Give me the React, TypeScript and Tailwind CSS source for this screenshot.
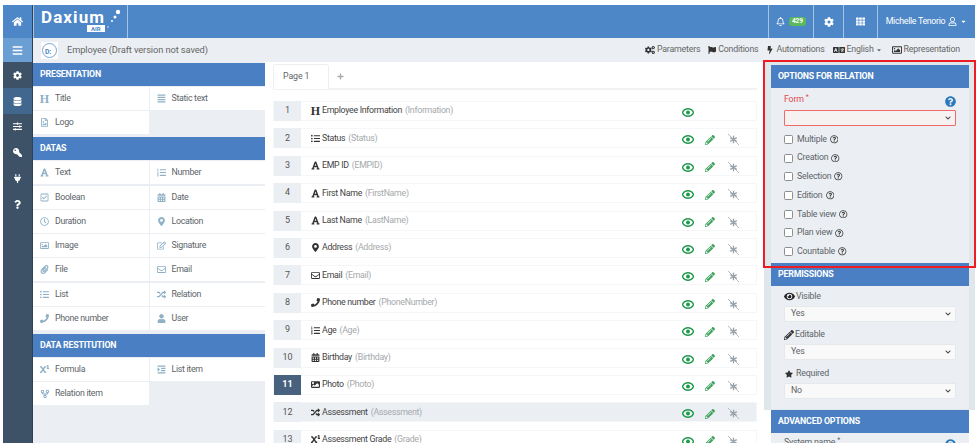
import React from "react";
import {
  FaHome, FaBars, FaCog, FaDatabase, FaSlidersH, FaKey, FaPlug, FaQuestion, FaRegBell, FaTh, FaRegUser, FaCogs, FaFlag,
  FaBolt, FaLanguage, FaRegImage, FaImage, FaEye, FaPencilAlt, FaAlignJustify, FaRegFileImage, FaFont, FaListOl,
  FaRegCheckSquare, FaCalendarAlt, FaRegClock, FaMapMarkerAlt, FaRegEdit, FaPaperclip, FaRegEnvelope, FaListUl, FaRandom,
  FaPhoneAlt, FaUser, FaSuperscript, FaIndent, FaChevronDown, FaQuestionCircle, FaRegQuestionCircle, FaStar, FaCaretDown, FaPlus,
} from "react-icons/fa";
import { GitFork } from "lucide-react";

const H = () => <span className="font-['Liberation_Serif',serif] text-[12px] font-bold leading-none tracking-normal">H</span>;

const Eye = () => (
  <svg viewBox="0 0 16 12" width="12" height="9">
    <path d="M8 1C4.600 1 1.900 3.200.6 6c1.300 2.800 4 5 7.400 5s6.100-2.200 7.400-5C14.100 3.200 11.400 1 8 1z" fill="none" stroke="currentColor" strokeWidth="2" />
    <circle cx="8" cy="6" r="2.600" fill="currentColor" />
  </svg>
);

const NoStar = () => (
  <svg viewBox="0 0 14 14" width="13" height="13" className="text-[#aeb6bc]">
    <path d="M1 1l12 12" stroke="currentColor" strokeWidth="1" />
    <path d="M7 3v8M3.500 5l7 4M10.500 5l-7 4" stroke="#9aa3a9" strokeWidth="1.500" />
  </svg>
);

type Item = { icon: React.ReactNode; label: string };
const Cell = ({ item }: { item: Item }) => (
  <div className="flex h-[23px] items-center bg-white pl-[4px]">
    <span className="flex w-[15px] justify-center text-[9px] text-[#8fb0c6]">{item.icon}</span>
    <span className="ml-[3px] text-[8.800px] tracking-[-0.3px] text-[#5d6468]">{item.label}</span>
  </div>
);

const Title = ({ children }: { children: React.ReactNode }) => (
  <div className="flex h-[23px] items-center bg-[#4a80c3] pl-[7px] text-[8.800px] font-bold tracking-[-0.2px] text-white">{children}</div>
);

const Section = ({ title, items, mb }: { title: string; items: Item[]; mb: string }) => (
  <div className={mb}>
    <Title>{title}</Title>
    <div className="mt-[1px] grid grid-cols-2 gap-x-[1px] gap-y-[1.300px]">
      {items.map((it) => (
        <Cell key={it.label} item={it} />
      ))}
    </div>
  </div>
);

const rows: [React.ReactNode, string, string, boolean?][] = [
  [<H />, "Employee Information", "(Information)", true],
  [<FaListUl />, "Status", "(Status)"],
  [<FaFont />, "EMP ID", "(EMPID)"],
  [<FaFont />, "First Name", "(FirstName)"],
  [<FaFont />, "Last Name", "(LastName)"],
  [<FaMapMarkerAlt />, "Address", "(Address)"],
  [<FaRegEnvelope />, "Email", "(Email)"],
  [<FaPhoneAlt className="-scale-x-100" />, "Phone number", "(PhoneNumber)"],
  [<FaListOl />, "Age", "(Age)"],
  [<FaCalendarAlt />, "Birthday", "(Birthday)"],
  [<FaImage />, "Photo", "(Photo)"],
  [<FaRandom />, "Assessment", "(Assessment)"],
  [<FaSuperscript />, "Assessment Grade", "(Grade)"],
];

const Select = ({ value, error }: { value?: string; error?: boolean }) => (
  <div
    className={`flex h-[16px] items-center justify-between rounded-[1px] border pl-[6px] pr-[2px] text-[8.800px] tracking-[-0.2px] text-[#5d6468] ${
      error ? "border-[#ef6a6a] bg-[#f6f2f2]" : "border-[#e6e9ec] bg-[#f9f9f9]"
    }`}
  >
    <span>{value}</span>
    <FaChevronDown className="mr-[2px] text-[6px] text-[#444]" />
  </div>
);

const checks = ["Multiple", "Creation", "Selection", "Edition", "Table view", "Plan view", "Countable"];

const HeadCell = ({ className, children }: { className: string; children: React.ReactNode }) => (
  <div className={`flex items-center justify-center border-l border-[#a6c3e3] text-white ${className}`}>{children}</div>
);

const RailBtn = ({ icon, cls }: { icon: React.ReactNode; cls: string }) => (
  <div className={`flex items-center justify-center text-white ${cls}`}>{icon}</div>
);

const Tool = ({ icon, label }: { icon: React.ReactNode; label: string }) => (
  <span className="flex items-center gap-[2px]">
    {icon}
    {label}
  </span>
);

export default function App() {
  return (
    <div className="relative h-[448px] w-[980px] overflow-hidden bg-white pb-[5px] pl-[3px] pr-[5px] pt-[5px] font-['Roboto',sans-serif]">
      <div className="flex h-full">
        <div className="flex w-[30px] flex-col border-r border-[#2f4255] bg-[#3d5267]">
          <RailBtn cls="h-[33px] bg-[#4d87c7] text-[11px]" icon={<FaHome />} />
          <RailBtn cls="h-[24px] bg-[#6b9fd4] text-[11px]" icon={<FaBars />} />
          <RailBtn cls="h-[26px] text-[9px]" icon={<FaCog />} />
          <RailBtn cls="h-[26px] bg-[#41678e] text-[9px]" icon={<FaDatabase />} />
          <RailBtn cls="h-[25px] text-[9px]" icon={<FaSlidersH />} />
          <RailBtn cls="h-[26px] text-[9px]" icon={<FaKey className="-scale-x-100" />} />
          <RailBtn cls="h-[26px] text-[9px]" icon={<FaPlug />} />
          <RailBtn cls="h-[26px] text-[9px]" icon={<FaQuestion />} />
        </div>
        <div className="flex min-w-0 flex-1 flex-col">
          <div className="flex h-[33px] bg-[#4d87c7]">
            <div className="flex w-[95px] border-x border-[#a6c3e3] pl-[7px] pt-[3px]">
              <div className="relative flex w-[80px] flex-col items-start">
                <span className="text-[17px] font-bold leading-[18px] tracking-[1.100px] text-white">Daxium</span>
                <span className="ml-[46px] mt-[-1px] bg-white px-[4px] text-[6px] font-bold leading-[7px] text-[#4d87c7]">AIR</span>
                <svg className="absolute left-[64px] top-[0px]" width="16" height="24" viewBox="0 0 16 24" fill="white">
                  <circle cx="13" cy="4" r="2.200" />
                  <circle cx="10" cy="9" r="1.500" />
                  <circle cx="7" cy="13" r="1" />
                  <circle cx="3" cy="19" r="0.700" />
                </svg>
              </div>
            </div>
            <div className="flex-1" />
            <HeadCell className="w-[45px] gap-[4px] text-[9px]">
              <FaRegBell />
              <span className="rounded-[3px] bg-[#5cb85c] px-[3px] text-[6.500px] font-bold leading-[9px]">429</span>
            </HeadCell>
            <HeadCell className="w-[30px] text-[10px]"><FaCog /></HeadCell>
            <HeadCell className="w-[34px] text-[9px]"><FaTh /></HeadCell>
            <HeadCell className="w-[98px] gap-[3px] text-[8.800px] tracking-[-0.3px]">
              <span>Michelle Tenorio</span>
              <FaRegUser className="text-[9px]" />
              <FaCaretDown className="text-[7px]" />
            </HeadCell>
          </div>
          <div className="flex h-[24px] items-center bg-[#ebeff3] pl-[8px] pr-[15px] text-[8.800px] tracking-[-0.2px] text-[#666]">
            <svg width="17" height="17" viewBox="0 0 17 17" className="bg-white">
              <circle cx="8.500" cy="8.500" r="7" fill="white" stroke="#7ba3d0" strokeWidth="1" />
              <text x="4" y="11.500" fontSize="7" fontWeight="700" fill="#4d87c7" fontFamily="Roboto">D:</text>
            </svg>
            <span className="ml-[9px] text-[9.300px] tracking-[-0.1px]">Employee (Draft version not saved)</span>
            <div className="flex-1" />
            <div className="flex items-center gap-[8px]">
              <Tool icon={<FaCogs className="text-[10px] text-[#333]" />} label="Parameters" />
              <Tool icon={<FaFlag className="text-[8px] text-[#333]" />} label="Conditions" />
              <Tool icon={<FaBolt className="text-[8px] text-[#333]" />} label="Automations" />
              <span className="flex items-center gap-[2px]">
                <FaLanguage className="text-[12px] text-[#333]" />
                English
                <FaCaretDown className="text-[6px]" />
              </span>
              <span className="ml-[2px]"><Tool icon={<FaRegImage className="text-[10px] text-[#333]" />} label="Representation" /></span>
            </div>
          </div>
          <div className="flex min-h-0 flex-1">
            <div className="flex w-[232px] flex-col bg-[#ebeff3] pt-[1px]">
              <Section
                mb="mb-[3px]"
                title="PRESENTATION"
                items={[
                  { icon: <H />, label: "Title" },
                  { icon: <FaAlignJustify />, label: "Static text" },
                  { icon: <FaRegFileImage />, label: "Logo" },
                ]}
              />
              <Section
                mb="mb-[4px]"
                title="DATAS"
                items={[
                  { icon: <FaFont />, label: "Text" },
                  { icon: <FaListOl />, label: "Number" },
                  { icon: <FaRegCheckSquare />, label: "Boolean" },
                  { icon: <FaCalendarAlt />, label: "Date" },
                  { icon: <FaRegClock />, label: "Duration" },
                  { icon: <FaMapMarkerAlt />, label: "Location" },
                  { icon: <FaRegImage />, label: "Image" },
                  { icon: <FaRegEdit />, label: "Signature" },
                  { icon: <FaPaperclip />, label: "File" },
                  { icon: <FaRegEnvelope />, label: "Email" },
                  { icon: <FaListUl />, label: "List" },
                  { icon: <FaRandom />, label: "Relation" },
                  { icon: <FaPhoneAlt className="-scale-x-100" />, label: "Phone number" },
                  { icon: <FaUser />, label: "User" },
                ]}
              />
              <Section
                mb=""
                title="DATA RESTITUTION"
                items={[
                  { icon: <FaSuperscript />, label: "Formula" },
                  { icon: <FaIndent />, label: "List item" },
                  { icon: <GitFork size={10} strokeWidth={2.500} />, label: "Relation item" },
                ]}
              />
            </div>
            <div className="w-[499px] overflow-hidden bg-white pl-[8px] pr-[7px] pt-[3px]">
              <div className="flex h-[25px] items-center border-b-2 border-[#f0f2f4] text-[8.800px] tracking-[-0.1px]">
                <div className="flex h-[25px] w-[56px] items-center rounded-t-[3px] border border-b-0 border-[#eceff2] bg-white pl-[9px] text-[#666]">Page 1</div>
                <FaPlus className="ml-[8px] text-[7px] text-[#aaa]" />
              </div>
              <div className="mt-[11px] flex flex-col gap-[7.400px]">
                {rows.map(([icon, name, sys, firstOnly], i) => {
                  const selected = i === 10;
                  const grey = i === 11;
                  return (
                    <div key={name} className={`flex h-[20px] shrink-0 items-center border border-[#f4f6f7] ${grey ? "bg-[#ebeff3]" : "bg-white"}`}>
                      <div className={`flex h-[20px] w-[27px] items-center justify-center text-[9px] ${selected ? "bg-[#47617f] font-bold text-white" : "bg-[#ebeff3] text-[#555]"}`}>{i + 1}</div>
                      <span className="ml-[9px] flex w-[11px] justify-center text-[9px] text-[#333]">{icon}</span>
                      <span className="ml-[1px] text-[8.800px] tracking-[-0.3px] text-[#444]">{name}</span>
                      <span className="ml-[3px] text-[8.800px] tracking-[-0.3px] text-[#a5a9ac]">{sys}</span>
                      <div className="flex-1" />
                      <div className="mr-[16px] mt-[3px] flex w-[58px] items-center gap-[11px] text-[#1f9a4d]">
                        <Eye />
                        {!firstOnly && <FaPencilAlt className="text-[10px] text-[#3fa35f]" />}
                        {!firstOnly && <span className="ml-[1px]"><NoStar /></span>}
                      </div>
                    </div>
                  );
                })}
              </div>
            </div>
            <div className="flex-1 overflow-hidden">
              <div className="h-[348px] bg-[#e0e7eb] pl-[7px] pr-[6px] pt-[3px]">
                <Title>OPTIONS FOR RELATION</Title>
                <div className="h-[175px] bg-[#ebeff3] px-[13px]">
                  <div className="flex items-start justify-between pt-[5px] text-[8.800px] tracking-[-0.2px] text-[#e2474f]">
                    <span>Form <sup className="text-[7px]">*</sup></span>
                    <FaQuestionCircle className="mt-[3px] text-[11px] text-[#2a78bd]" />
                  </div>
                  <div className="mt-[3px]"><Select error /></div>
                  <div className="mt-[4px] flex flex-col">
                    {checks.map((c) => (
                      <div key={c} className="flex h-[18.700px] items-center gap-[4px] text-[8.800px] tracking-[-0.2px] text-[#5d6468]">
                        <span className="h-[9px] w-[9px] rounded-[1.500px] border border-[#8b8f92] bg-white" />
                        <span>{c}</span>
                        <FaRegQuestionCircle className="ml-[-1px] text-[8.500px] text-[#444]" />
                      </div>
                    ))}
                  </div>
                </div>
                <Title>PERMISSIONS</Title>
                <div className="bg-[#ebeff3] px-[13px] pt-[2px] text-[8.800px] tracking-[-0.2px] text-[#5d6468]">
                  <div className="flex h-[17px] items-center gap-[1px]"><FaEye className="text-[11px] text-[#222]" />Visible</div>
                  <div className="pt-[1px]"><Select value="Yes" /></div>
                  <div className="mt-[4px] flex h-[18px] items-center gap-[1px]"><FaPencilAlt className="text-[10px] text-[#333]" />Editable</div>
                  <Select value="Yes" />
                  <div className="mt-[4px] flex h-[19px] items-center gap-[3px]"><FaStar className="ml-[1px] text-[8px] text-[#333]" />Required</div>
                  <Select value="No" />
                  <div className="h-[10px]" />
                </div>
              </div>
              <div className="ml-[7px] mr-[6px]">
                <Title>ADVANCED OPTIONS</Title>
                <div className="flex h-[20px] items-start justify-between bg-[#ebeff3] px-[13px] pt-[3px] text-[8.800px] tracking-[-0.2px] text-[#5d6468]">
                  <span>System name <sup className="text-[7px]">*</sup></span>
                  <FaQuestionCircle className="mt-[3px] text-[11px] text-[#2a78bd]" />
                </div>
              </div>
            </div>
          </div>
        </div>
      </div>
      <div className="absolute left-[763px] top-[60px] h-[208px] w-[213px] border-[2.500px] border-[#ee1c25]" />
    </div>
  );
}
